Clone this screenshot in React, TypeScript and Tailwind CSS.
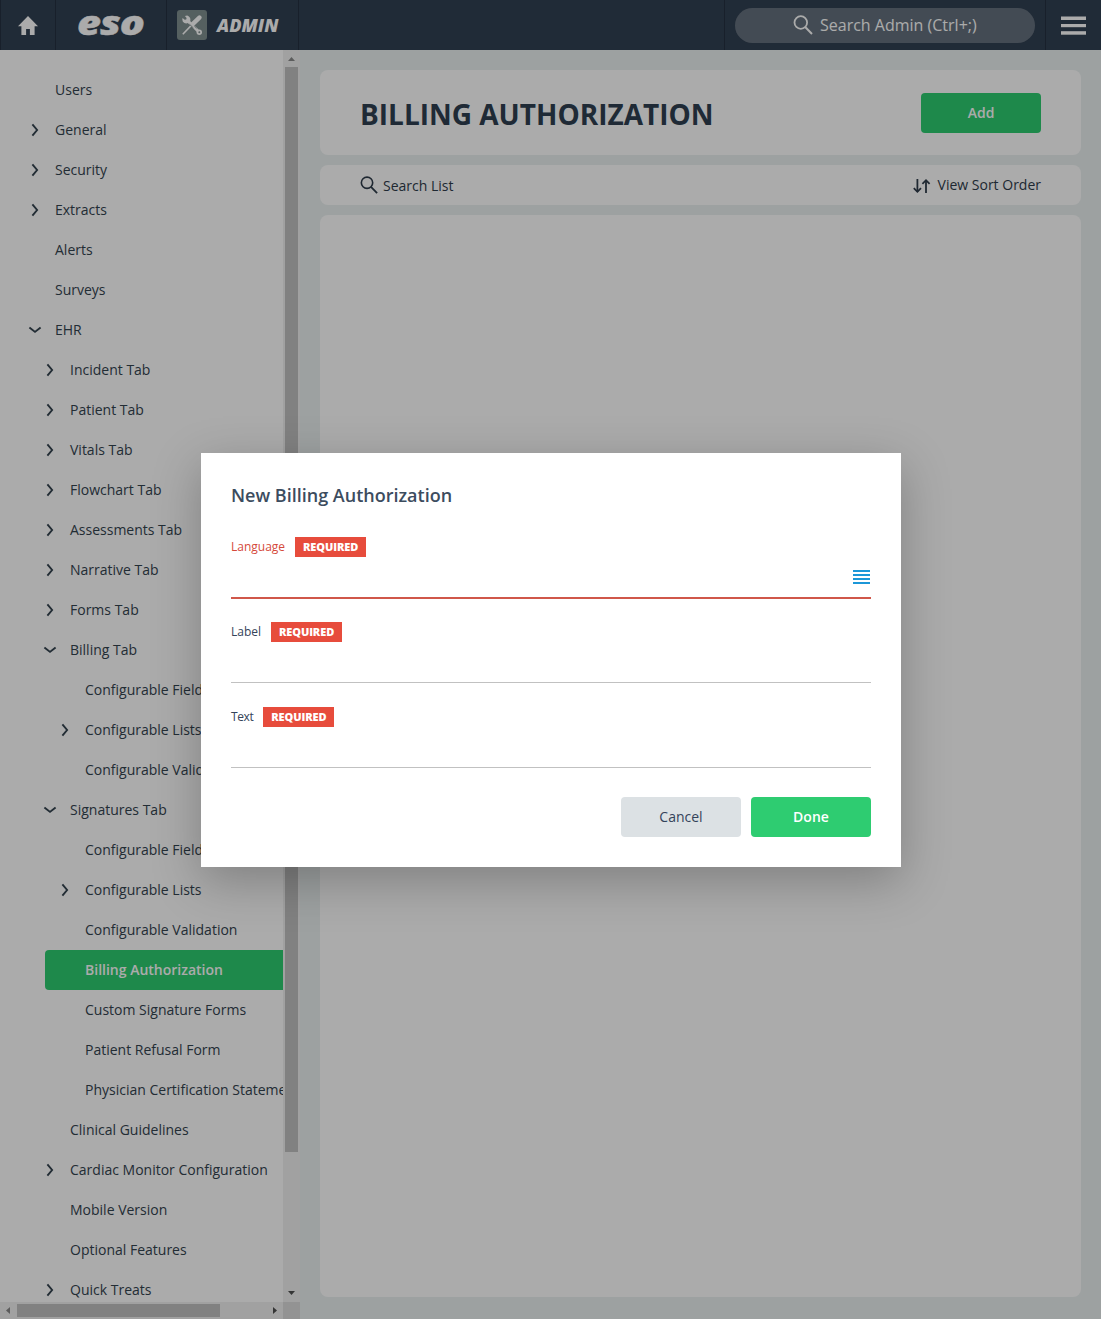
import clsx from 'clsx';

interface NavItem {
  label: string;
  level: number;
  state?: 'open' | 'closed';
  active?: boolean;
}

const navItems: NavItem[] = [
  { label: 'Users', level: 0 },
  { label: 'General', level: 0, state: 'closed' },
  { label: 'Security', level: 0, state: 'closed' },
  { label: 'Extracts', level: 0, state: 'closed' },
  { label: 'Alerts', level: 0 },
  { label: 'Surveys', level: 0 },
  { label: 'EHR', level: 0, state: 'open' },
  { label: 'Incident Tab', level: 1, state: 'closed' },
  { label: 'Patient Tab', level: 1, state: 'closed' },
  { label: 'Vitals Tab', level: 1, state: 'closed' },
  { label: 'Flowchart Tab', level: 1, state: 'closed' },
  { label: 'Assessments Tab', level: 1, state: 'closed' },
  { label: 'Narrative Tab', level: 1, state: 'closed' },
  { label: 'Forms Tab', level: 1, state: 'closed' },
  { label: 'Billing Tab', level: 1, state: 'open' },
  { label: 'Configurable Fields', level: 2 },
  { label: 'Configurable Lists', level: 2, state: 'closed' },
  { label: 'Configurable Validation', level: 2 },
  { label: 'Signatures Tab', level: 1, state: 'open' },
  { label: 'Configurable Fields', level: 2 },
  { label: 'Configurable Lists', level: 2, state: 'closed' },
  { label: 'Configurable Validation', level: 2 },
  { label: 'Billing Authorization', level: 2, active: true },
  { label: 'Custom Signature Forms', level: 2 },
  { label: 'Patient Refusal Form', level: 2 },
  { label: 'Physician Certification Statement', level: 2 },
  { label: 'Clinical Guidelines', level: 1 },
  { label: 'Cardiac Monitor Configuration', level: 1, state: 'closed' },
  { label: 'Mobile Version', level: 1 },
  { label: 'Optional Features', level: 1 },
  { label: 'Quick Treats', level: 1, state: 'closed' },
];

const indents = ['ml-[15px]', 'ml-[30px]', 'ml-[45px]'];

function SearchIcon({ className }: { className?: string }) {
  return (
    <svg viewBox="0 0 20 20" className={className} fill="none" stroke="currentColor">
      <circle cx="7.8" cy="7.5" r="6.3" strokeWidth="1.8" />
      <path d="M12.2 12 L19 19" strokeWidth="2" />
    </svg>
  );
}

function Chevron({ state }: { state: 'open' | 'closed' }) {
  return (
    <svg viewBox="0 0 14 14" className="h-3.5 w-3.5" fill="none" stroke="currentColor" strokeWidth="1.9">
      {state === 'open' ? <path d="M1.4 4.4 L7 8.9 L12.6 4.4" /> : <path d="M4.4 1.4 L9.1 7 L4.4 12.6" />}
    </svg>
  );
}

function Header() {
  return (
    <header className="flex h-[50px] shrink-0 bg-[#314052] text-white">
      <div className="flex w-14 items-center justify-center border-x border-[#253141]">
        <svg viewBox="0 0 20 19" className="h-[19px] w-5" fill="currentColor">
          <path d="M10 0 L20 10.3 H16.6 V19 H11.9 V13 H8.1 V19 H3.4 V10.3 H0 Z" />
        </svg>
      </div>
      <div className="flex w-[111px] items-center justify-center border-r border-[#253141]">
        <span className="mt-[-7px] mr-0.5 block scale-x-[1.22] text-[34px] leading-[50px] font-extrabold tracking-[-0.8px] italic [-webkit-text-stroke:0.4px_white]">
          eso
        </span>
      </div>
      <div className="flex w-[132px] items-center border-r border-[#253141] pl-2.5">
        <div className="flex h-[30px] w-[30px] items-center justify-center rounded-[3px] bg-[#7f8f8f]">
          <svg viewBox="0 0 20 20" className="h-5 w-5">
            <g fill="none" stroke="#fff">
              <path d="M0.8 19.2 L11 8.6" strokeWidth="1.6" />
              <path d="M10.4 9.4 L17.4 2.6" strokeWidth="4.4" strokeLinecap="round" />
              <path d="M5.6 5.6 L17.2 17.2" strokeWidth="3" />
            </g>
            <path d="M5.2 0.5 L2.9 0.9 L4.6 2.9 L4.2 4.4 L2.7 4.8 L0.6 3 Q-0.4 6.4 2.4 8 Q4 8.9 6 8.1 L8.3 5.8 Q9 2 5.2 0.5 Z" fill="#fff" />
            <circle cx="17.3" cy="17.3" r="2.7" fill="#fff" />
            <circle cx="17.3" cy="17.3" r="1" fill="#7f8f8f" />
            <path d="M7.4 9.2 L11.4 13" stroke="#7f8f8f" strokeWidth="0.9" />
            <path d="M12.2 10.8 L14.6 13.2" stroke="#7f8f8f" strokeWidth="0.9" />
          </svg>
        </div>
        <span className="ml-2.5 text-lg font-extrabold italic">ADMIN</span>
      </div>
      <div className="ml-auto flex w-[322px] items-center border-x border-[#253141] px-2.5">
        <div className="flex h-[35px] w-[300px] items-center rounded-full bg-[#65717e] pl-[58px] text-base">
          <SearchIcon className="h-5 w-5" />
          <span className="ml-[7px]">Search Admin (Ctrl+;)</span>
        </div>
      </div>
      <div className="flex w-[55px] items-center justify-center">
        <svg viewBox="0 0 25 20" className="mt-0.5 h-5 w-[25px]" fill="currentColor">
          <rect y="0.5" width="25" height="3.5" />
          <rect y="8" width="25" height="3.2" />
          <rect y="15.2" width="25" height="3.5" />
        </svg>
      </div>
    </header>
  );
}

function Sidebar() {
  return (
    <aside className="grid w-[300px] shrink-0 grid-cols-[283px_17px] grid-rows-[1252px_17px] bg-white text-[#34434f]">
      <nav className="overflow-hidden pt-5 text-sm">
        {navItems.map((item, i) => (
          <div
            key={i}
            className={clsx(
              'flex h-10 items-center whitespace-nowrap',
              indents[item.level],
              item.active && 'rounded-l bg-[#2ecc71] font-semibold text-white'
            )}
          >
            <div className="flex w-10 shrink-0 justify-center">
              {item.state && <Chevron state={item.state} />}
            </div>
            <span>{item.label}</span>
          </div>
        ))}
      </nav>

      {/* Vertical scrollbar */}
      <div className="flex flex-col items-center bg-[#f1f1f1]">
        <svg viewBox="0 0 17 17" className="h-[17px] w-[17px]">
          <path d="M5 11 H12 L8.5 7 Z" fill="#8a8a8a" />
        </svg>
        <div className="h-[1085px] w-[13px] bg-[#c1c1c1]" />
        <svg viewBox="0 0 17 17" className="mt-auto h-[17px] w-[17px]">
          <path d="M5 6 H12 L8.5 10 Z" fill="#505050" />
        </svg>
      </div>

      {/* Horizontal scrollbar */}
      <div className="flex items-center bg-[#f1f1f1]">
        <svg viewBox="0 0 17 17" className="h-[17px] w-[17px]">
          <path d="M10 5 V12 L6 8.5 Z" fill="#8a8a8a" />
        </svg>
        <div className="h-[13px] w-[203px] bg-[#c1c1c1]" />
        <svg viewBox="0 0 17 17" className="ml-auto h-[17px] w-[17px]">
          <path d="M7 5 V12 L11 8.5 Z" fill="#505050" />
        </svg>
      </div>
      <div className="bg-[#dcdcdc]" />
    </aside>
  );
}

function Content() {
  return (
    <main className="flex flex-1 flex-col gap-2.5 px-5 pt-5 pb-[22px] text-[#2f3c4b]">
      <div className="flex h-[85px] items-center justify-between rounded-lg bg-white px-10">
        <h1 className="pt-0.5 text-[28px] font-bold text-[#2f3f51]">BILLING AUTHORIZATION</h1>
        <button className="h-10 w-[120px] rounded bg-[#2ecc71] text-sm font-semibold text-white">Add</button>
      </div>
      <div className="flex h-10 items-center justify-between rounded-lg bg-white px-10 text-sm">
        <div className="flex items-center">
          <SearchIcon className="h-[18px] w-[18px]" />
          <span className="ml-[5px] pt-0.5">Search List</span>
        </div>
        <div className="flex items-center">
          <svg viewBox="0 0 18 16" className="mt-0.5 h-4 w-[18px]" fill="none" stroke="currentColor" strokeWidth="1.8">
            <path d="M4.4 1 V14" />
            <path d="M0.8 10.2 L4.4 13.8 L8 10.2" />
            <path d="M13 15 V2" />
            <path d="M9.4 5.8 L13 2.2 L16.6 5.8" />
          </svg>
          <span className="ml-[7px]">View Sort Order</span>
        </div>
      </div>
      <div className="flex-1 rounded-lg bg-white" />
    </main>
  );
}

function Field({ label, invalid }: { label: string; invalid?: boolean }) {
  return (
    <div className="h-[85px]">
      <div className="flex h-5 items-center text-xs">
        <span className={clsx(invalid && 'text-[#d5493b]', label === 'Text' && 'tracking-[-0.4px]')}>{label}</span>
        <span className="ml-2.5 flex h-5 w-[71px] items-center justify-center bg-[#e74c3c] text-[11px] font-extrabold tracking-[-0.1px] text-white">
          REQUIRED
        </span>
      </div>
      <div
        className={clsx(
          'flex items-center justify-end',
          invalid ? 'h-[42px] border-b-2 border-[#d0574a]' : 'h-[41px] border-b border-[#c1c1c1]'
        )}
      >
        {invalid && (
          <div className="mr-px flex w-[17px] flex-col gap-0.5">
            <div className="h-0.5 bg-[#1c97d8]" />
            <div className="h-0.5 bg-[#1c97d8]" />
            <div className="h-0.5 bg-[#1c97d8]" />
            <div className="h-0.5 bg-[#1c97d8]" />
          </div>
        )}
      </div>
    </div>
  );
}

function Dialog() {
  return (
    <div className="absolute inset-0 flex items-center justify-center bg-black/33 pt-px pl-px">
      <div className="h-[414px] w-[700px] bg-white px-[30px] text-[#34435a] shadow-[0_14px_45px_rgba(0,0,0,0.25)]">
        <h2 className="pt-[30px] text-lg leading-[25px] font-semibold text-[#3c4c5e]">New Billing Authorization</h2>
        <div className="mt-[29px]">
          <Field label="Language" invalid />
          <Field label="Label" />
          <Field label="Text" />
        </div>
        <div className="mt-[5px] flex justify-end gap-2.5 text-sm">
          <button className="h-10 w-[120px] rounded bg-[#dce1e4]">Cancel</button>
          <button className="h-10 w-[120px] rounded bg-[#2ecc71] font-semibold text-white">Done</button>
        </div>
      </div>
    </div>
  );
}

export default function App() {
  return (
    <div className="relative flex h-[1319px] w-[1101px] flex-col overflow-hidden bg-[#ebf1f1] font-['Open_Sans',sans-serif]">
      <Header />
      <div className="flex min-h-0 flex-1">
        <Sidebar />
        <Content />
      </div>
      <Dialog />
    </div>
  );
}
